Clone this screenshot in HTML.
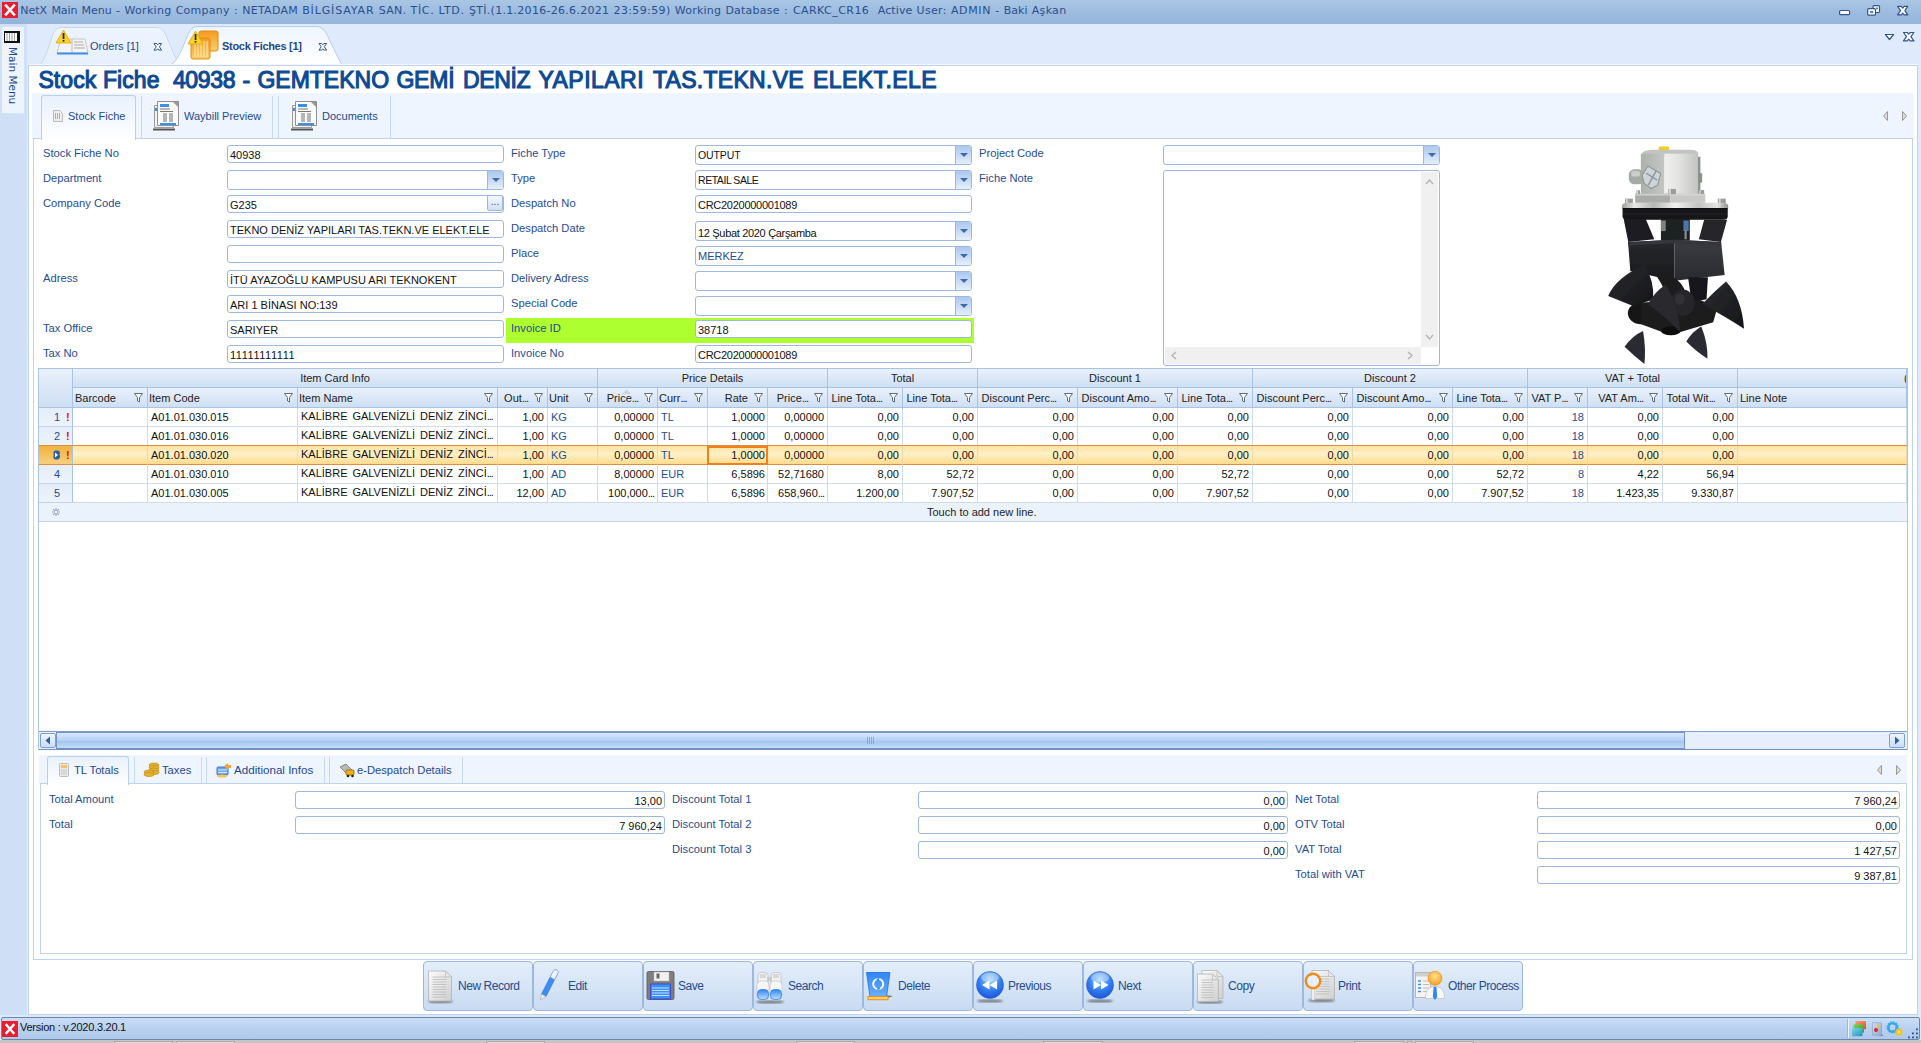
<!DOCTYPE html><html><head><meta charset="utf-8"><title>NetX Main Menu</title><style>
*{box-sizing:border-box}
html,body{margin:0;padding:0}
body{width:1921px;height:1043px;overflow:hidden;position:relative;background:#dfebfc;font:11px "Liberation Sans",sans-serif;color:#1e4a8c}
.a{position:absolute;white-space:pre}
.lbl{position:absolute;white-space:pre;font-size:11.2px;color:#1f4d91;line-height:14px}
.inp{position:absolute;height:18px;border:1px solid #9db8dc;border-radius:3px;background:#fff;color:#111;font-size:11px;line-height:19px;padding-left:2px;white-space:pre;overflow:hidden}
.inp.r{text-align:right;padding-right:2px}
.dd{position:absolute;right:0;top:0;bottom:0;width:16px;border-left:1px solid #9db8dc;background:linear-gradient(#abc8f0,#cadcf6 55%,#e6effb)}
.dd:after{content:"";position:absolute;left:4px;top:7px;border:4px solid transparent;border-top:4px solid #3f6aa6;border-bottom:0}
.seg{font-family:"Liberation Sans",sans-serif;font-size:11px;color:#1e4a8c}
.gh{position:absolute;background:linear-gradient(#e9f1fc,#cfdff3);border-right:1px solid #a9c3e3;border-bottom:1px solid #a9c3e3;font-size:11px;color:#222;line-height:18px;white-space:pre;overflow:hidden}
.gc{position:absolute;height:19px;border-right:1px solid #cfdcee;border-bottom:1px solid #cfdcee;font-size:11px;color:#111;line-height:19px;white-space:pre;overflow:hidden;padding:0 3px}
.gc.r{text-align:right}
.gc.b{color:#1f4d91}
.btn{position:absolute;top:961px;width:110px;height:50px;border:1px solid #9db8dc;border-radius:4px;background:linear-gradient(#e4eefb,#c9dbf2)}
.btn span{position:absolute;left:34px;top:16px;font-size:12px;letter-spacing:-0.45px;line-height:16px;color:#1f4d91;white-space:pre}
</style></head><body>
<div class="a" style="left:0;top:0;width:1921px;height:24px;background:linear-gradient(#a9c6e5,#9bbade 60%,#94b4da)"></div>
<div class="a" style="left:2px;top:2px;width:16px;height:16px;background:#e81d2d"></div>
<svg class="a" style="left:2px;top:2px" width="16" height="16"><path d="M4 3.5L12 12.5M12 3.5L4 12.5" stroke="#fff" stroke-width="2.6" stroke-linecap="square"/></svg>
<div class="a" style="left:20px;top:3px;width:1060px;height:15px;font:11px 'DejaVu Sans',sans-serif;color:#2a4f8f;line-height:15px"><span class="a" style="left:0.2px;letter-spacing:0.04px">NetX </span><span class="a" style="left:31.4px;letter-spacing:-0.09px">Main </span><span class="a" style="left:61.5px;letter-spacing:0.02px">Menu </span><span class="a" style="left:96.0px;letter-spacing:0.32px">- </span><span class="a" style="left:104.5px;letter-spacing:0.3px">Working </span><span class="a" style="left:155.7px;letter-spacing:0.25px">Company </span><span class="a" style="left:214.0px;letter-spacing:0.38px">: </span><span class="a" style="left:222.3px;letter-spacing:0.26px">NETADAM </span><span class="a" style="left:282.2px;letter-spacing:0.87px">BİLGİSAYAR </span><span class="a" style="left:358.7px;letter-spacing:0.29px">SAN. </span><span class="a" style="left:390.5px;letter-spacing:0.69px">TİC. </span><span class="a" style="left:418.6px;letter-spacing:0.72px">LTD. </span><span class="a" style="left:449.0px;letter-spacing:0.29px">ŞTİ.(1.1.2016-26.6.2021 </span><span class="a" style="left:593.5px;letter-spacing:0.38px">23:59:59) </span><span class="a" style="left:654.8px;letter-spacing:0.22px">Working </span><span class="a" style="left:705.4px;letter-spacing:0.22px">Database </span><span class="a" style="left:763.9px;letter-spacing:1.08px">: </span><span class="a" style="left:772.9px;letter-spacing:0.44px">CARKC_CR16 </span><span class="a" style="left:857.8px;letter-spacing:0.09px">Active </span><span class="a" style="left:896.6px;letter-spacing:0.3px">User: </span><span class="a" style="left:930.9px;letter-spacing:0.65px">ADMIN </span><span class="a" style="left:975.3px;letter-spacing:0.22px">- </span><span class="a" style="left:983.7px;letter-spacing:0.05px">Baki </span><span class="a" style="left:1011.8px;letter-spacing:0.29px">Aşkan </span></div>
<svg class="a" style="left:1830px;top:0" width="91" height="24"><g fill="#fff" stroke="#34568c" stroke-width="1.2" stroke-linejoin="round"><rect x="9.6" y="10.5" width="10" height="4.2" rx="1"/><rect x="43" y="5.700" width="6.500" height="6.800" rx="1"/><rect x="46.300" y="7.800" width="1.200" height="1.200" stroke-width="0.7"/><rect x="37.700" y="8.700" width="7.800" height="6.500" rx="1"/><rect x="40.300" y="11.500" width="2.600" height="1.200" stroke-width="0.8"/><path d="M67.60 6.40 L71.27 6.40 L72.70 8.08 L74.13 6.40 L77.80 6.40 L74.84 10.60 L77.80 14.80 L74.13 14.80 L72.70 13.12 L71.27 14.80 L67.60 14.80 L70.56 10.60z"/></g></svg>
<div class="a" style="left:0;top:24px;width:27px;height:994px;background:#cfdff5"></div>
<div class="a" style="left:1px;top:26px;width:24px;height:88px;background:#edf4fd;border:1px solid #d3e2f6"></div>
<svg class="a" style="left:4px;top:31px" width="16" height="12"><rect x="0" y="0" width="16" height="12" fill="#111"/><rect x="1" y="2" width="12" height="8" fill="#fff"/><path d="M3 2v8M5.500 2v8M8 2v8M10.500 2v8" stroke="#777" stroke-width="0.7"/></svg>
<div class="a" style="left:19px;top:47px;transform-origin:0 0;transform:rotate(90deg);font:10.5px 'DejaVu Sans',sans-serif;letter-spacing:0px;color:#1e4a8c">Main Menu</div>
<svg class="a" style="left:28px;top:24px" width="1893" height="42">
<defs><linearGradient id="tg" x1="0" y1="0" x2="0" y2="1"><stop offset="0" stop-color="#edf4fe"/><stop offset="1" stop-color="#e6effc"/></linearGradient>
<linearGradient id="tg2" x1="0" y1="0" x2="0" y2="1"><stop offset="0" stop-color="#eef5fe"/><stop offset="1" stop-color="#ffffff"/></linearGradient></defs>
<path d="M9 41.500C14 41.500 16 35 20 25C24.500 13 25 3.500 33 3.500H128C134 3.500 136 6 140 16L151 41.500z" fill="url(#tg)" stroke="#c5d8f1"/>
<path d="M139 41.500C146 41.500 149 35 154 25C159.500 13 161 2.500 169 2.500H288C296 2.500 298 9 302 17L314 41.500z" fill="url(#tg2)" stroke="#b5cdec"/>
</svg>
<div class="a seg" style="left:90px;top:40px">Orders [1]</div>
<div class="a seg" style="left:222px;top:40px;font-weight:bold;font-size:11px;letter-spacing:-0.3px">Stock Fiches [1]</div>
<svg class="a" style="left:153px;top:42px" width="10" height="10"><path d="M1.00 1.50 L3.74 1.50 L4.80 2.82 L5.86 1.50 L8.60 1.50 L6.40 4.80 L8.60 8.10 L5.86 8.10 L4.80 6.78 L3.74 8.10 L1.00 8.10 L3.20 4.80z" fill="#fff" stroke="#34568c" stroke-width="1" stroke-linejoin="round"/></svg>
<svg class="a" style="left:318px;top:42px" width="10" height="10"><path d="M1.00 1.50 L3.74 1.50 L4.80 2.82 L5.86 1.50 L8.60 1.50 L6.40 4.80 L8.60 8.10 L5.86 8.10 L4.80 6.78 L3.74 8.10 L1.00 8.10 L3.20 4.80z" fill="#fff" stroke="#34568c" stroke-width="1" stroke-linejoin="round"/></svg>
<svg class="a" style="left:55px;top:28px" width="34" height="30">
<path d="M2 25L6 11h24l3 14z" fill="#f4f4f4" stroke="#c8c8c8"/><path d="M17 11v14" stroke="#bbb"/><path d="M19 14h9M19 17h10M19 20h11" stroke="#aaa"/><path d="M2 25.500h31" stroke="#3b8fe8" stroke-width="2"/>
<path d="M8.500 2L16 15H1z" fill="#fbd22b" stroke="#e0a800" stroke-width="0.8"/><rect x="7.700" y="5" width="1.700" height="6" fill="#222"/><rect x="7.700" y="12" width="1.700" height="1.600" fill="#222"/></svg>
<svg class="a" style="left:187px;top:29px" width="34" height="32">
<defs><linearGradient id="og" x1="0" y1="0" x2="0" y2="1"><stop offset="0" stop-color="#f59a1e"/><stop offset="1" stop-color="#fbd06a"/></linearGradient></defs>
<rect x="12" y="2" width="19" height="20" rx="2" fill="url(#og)" stroke="#e58a10"/>
<rect x="4" y="9" width="19" height="21" rx="2" fill="url(#og)" stroke="#e58a10"/>
<path d="M8 12v16M11 12v16M14 12v16M17 12v16M20 12v16" stroke="#fde9b8" stroke-width="1"/>
<path d="M8.500 2L16 15H1z" fill="#fbd22b" stroke="#e0a800" stroke-width="0.8"/><rect x="7.700" y="5" width="1.700" height="6" fill="#222"/><rect x="7.700" y="12" width="1.700" height="1.600" fill="#222"/></svg>
<svg class="a" style="left:1880px;top:30px" width="40" height="14"><g fill="#fff" stroke="#34568c" stroke-width="1.2" stroke-linejoin="round"><path d="M5.400 4.500h8.200l-4.100 5z"/><path d="M23.50 2.50 L27.24 2.50 L28.70 4.18 L30.16 2.50 L33.90 2.50 L30.88 6.70 L33.90 10.90 L30.16 10.90 L28.70 9.22 L27.24 10.90 L23.50 10.90 L26.52 6.70z"/></g></svg>
<div class="a" style="left:28px;top:64px;width:1890px;height:1px;background:#f4f8fe"></div>
<div class="a" style="left:28px;top:65px;width:1890px;height:950px;background:#fff;border:1px solid #bdd3ef"></div>
<div class="a" style="left:38px;top:66px;width:1000px;height:28px;font:normal 23px 'Liberation Sans',sans-serif;color:#0d4a94;-webkit-text-stroke:1.1px #0d4a94;line-height:28px"><span class="a" style="left:0.4px;letter-spacing:0.10px">Stock Fiche </span><span class="a" style="left:134.9px;letter-spacing:-0.32px">40938 </span><span class="a" style="left:204.4px;letter-spacing:0.00px">- </span><span class="a" style="left:219.4px;letter-spacing:0.01px">GEMTEKNO </span><span class="a" style="left:358.4px;letter-spacing:-0.19px">GEMİ </span><span class="a" style="left:424.9px;letter-spacing:-0.32px">DENİZ </span><span class="a" style="left:500.4px;letter-spacing:0.48px">YAPILARI </span><span class="a" style="left:614.9px;letter-spacing:0.29px">TAS.TEKN.VE </span><span class="a" style="left:774.9px;letter-spacing:0.44px">ELEKT.ELE </span></div>
<div class="a" style="left:32px;top:93px;width:1882px;height:46px;background:#eef5fe"></div>
<div class="a" style="left:33px;top:138px;width:1880px;height:822px;background:#fff;border:1px solid #bdd3ef"></div>
<div class="a" style="left:41px;top:95px;width:95px;height:45px;background:linear-gradient(#e8f1fd,#fff);border:1px solid #b9d0ee;border-bottom:0;border-radius:3px 3px 0 0"></div>
<div class="a" style="left:141px;top:96px;width:1px;height:42px;background:#c8daf2"></div>
<div class="a" style="left:272px;top:96px;width:1px;height:42px;background:#c8daf2"></div>
<div class="a" style="left:278px;top:96px;width:1px;height:42px;background:#c8daf2"></div>
<div class="a" style="left:390px;top:96px;width:1px;height:42px;background:#c8daf2"></div>
<div class="a seg" style="left:68px;top:110px">Stock Fiche</div>
<div class="a seg" style="left:184px;top:110px">Waybill Preview</div>
<div class="a seg" style="left:322px;top:110px">Documents</div>
<svg class="a" style="left:52px;top:108px" width="13" height="15"><path d="M1.500 2.500h6l3 3v8h-9z" fill="#eee" stroke="#bbb"/><path d="M3.500 5v6M5.500 5v6M7.500 5v6" stroke="#f3a53a"/></svg>
<svg class="a" style="left:153px;top:99px" width="27" height="32">
<path d="M1.500 6.500h19v22h-19z" fill="#f2f2f2" stroke="#9a9a9a"/><rect x="2" y="9" width="2" height="3" fill="#3b8fe8"/>
<path d="M4.500 2.500h21v24h-21z" fill="#fafafa" stroke="#8f8f8f"/><path d="M20 3h5v5z" fill="#999"/>
<rect x="7" y="5" width="9" height="3" fill="#3b8fe8"/><path d="M7 10h10M7 12.500h13" stroke="#777"/>
<rect x="10" y="14" width="4" height="9" fill="#b5b5b5"/><rect x="16" y="14" width="4" height="9" fill="#b5b5b5"/><rect x="7" y="24" width="16" height="2" fill="#3b8fe8"/>
<path d="M0 30.500h22" stroke="#555" stroke-width="2"/></svg>
<svg class="a" style="left:291px;top:99px" width="27" height="32">
<path d="M1.500 6.500h19v22h-19z" fill="#f2f2f2" stroke="#9a9a9a"/><rect x="2" y="9" width="2" height="3" fill="#3b8fe8"/>
<path d="M4.500 2.500h21v24h-21z" fill="#fafafa" stroke="#8f8f8f"/><path d="M20 3h5v5z" fill="#999"/>
<rect x="7" y="5" width="9" height="3" fill="#3b8fe8"/><path d="M7 10h10M7 12.500h13" stroke="#777"/>
<rect x="10" y="14" width="4" height="9" fill="#b5b5b5"/><rect x="16" y="14" width="4" height="9" fill="#b5b5b5"/><rect x="7" y="24" width="16" height="2" fill="#3b8fe8"/>
<path d="M0 30.500h22" stroke="#555" stroke-width="2"/></svg>
<svg class="a" style="left:1881px;top:110px" width="30" height="12"><path d="M6.500 1.500v9l-4-4.500z" fill="#ddd" stroke="#999"/><path d="M21.500 1.500v9l4-4.500z" fill="#ddd" stroke="#999"/></svg>
<div class="a" style="left:506px;top:318px;width:468px;height:25px;background:#adff2f"></div>
<div class="lbl" style="left:43px;top:145.5px">Stock Fiche No</div>
<div class="inp " style="left:227px;top:145px;width:277px;">40938</div>
<div class="lbl" style="left:43px;top:170.5px">Department</div>
<div class="inp " style="left:227px;top:170px;width:277px;height:20px;"><i class=dd></i></div>
<div class="lbl" style="left:43px;top:195.5px">Company Code</div>
<div class="inp " style="left:227px;top:195px;width:277px;">G235</div>
<div class="inp " style="left:227px;top:220px;width:277px;">TEKNO DENİZ YAPILARI TAS.TEKN.VE ELEKT.ELE</div>
<div class="inp " style="left:227px;top:245px;width:277px;"></div>
<div class="lbl" style="left:43px;top:270.5px">Adress</div>
<div class="inp " style="left:227px;top:270px;width:277px;">İTÜ AYAZOĞLU KAMPUSU ARI TEKNOKENT</div>
<div class="inp " style="left:227px;top:295px;width:277px;">ARI 1 BİNASI NO:139</div>
<div class="lbl" style="left:43px;top:320.5px">Tax Office</div>
<div class="inp " style="left:227px;top:320px;width:277px;">SARIYER</div>
<div class="lbl" style="left:43px;top:345.5px">Tax No</div>
<div class="inp " style="left:227px;top:345px;width:277px;letter-spacing:0.55px;">11111111111</div>
<div class="a" style="left:487px;top:195px;width:16px;height:16px;border:1px solid #9db8dc;border-radius:2px;background:linear-gradient(#f3f8fe,#cfe0f5);font-size:10px;line-height:12px;text-align:center;color:#1f4d91">...</div>
<div class="lbl" style="left:511px;top:145.5px">Fiche Type</div>
<div class="inp " style="left:695px;top:145px;width:277px;height:20px;font-size:10.5px;letter-spacing:-0.1px;">OUTPUT<i class=dd></i></div>
<div class="lbl" style="left:511px;top:170.5px">Type</div>
<div class="inp " style="left:695px;top:170px;width:277px;height:20px;font-size:10.5px;letter-spacing:-0.45px;">RETAIL SALE<i class=dd></i></div>
<div class="lbl" style="left:511px;top:195.5px">Despatch No</div>
<div class="inp " style="left:695px;top:195px;width:277px;letter-spacing:-0.27px;">CRC2020000001089</div>
<div class="lbl" style="left:511px;top:220.5px">Despatch Date</div>
<div class="inp " style="left:695px;top:221px;width:277px;height:20px;line-height:22px;letter-spacing:-0.32px;">12 Şubat 2020 Çarşamba<i class=dd></i></div>
<div class="lbl" style="left:511px;top:245.5px">Place</div>
<div class="inp " style="left:695px;top:246px;width:277px;height:20px;color:#1f4d91;">MERKEZ<i class=dd></i></div>
<div class="lbl" style="left:511px;top:270.5px">Delivery Adress</div>
<div class="inp " style="left:695px;top:271px;width:277px;height:20px;"><i class=dd></i></div>
<div class="lbl" style="left:511px;top:295.5px">Special Code</div>
<div class="inp " style="left:695px;top:296px;width:277px;height:20px;"><i class=dd></i></div>
<div class="lbl" style="left:511px;top:320.5px">Invoice ID</div>
<div class="inp " style="left:695px;top:320px;width:277px;">38718</div>
<div class="lbl" style="left:511px;top:345.5px">Invoice No</div>
<div class="inp " style="left:695px;top:345px;width:277px;letter-spacing:-0.27px;">CRC2020000001089</div>
<div class="lbl" style="left:979px;top:145.5px">Project Code</div>
<div class="lbl" style="left:979px;top:170.5px">Fiche Note</div>
<div class="inp " style="left:1163px;top:145px;width:277px;height:20px;"><i class=dd></i></div>
<div class="a" style="left:1163px;top:170px;width:277px;height:196px;border:1px solid #9db8dc;border-radius:3px;background:#fff"></div>
<div class="a" style="left:1421px;top:172px;width:17px;height:175px;background:#f0f0f0"></div>
<div class="a" style="left:1165px;top:347px;width:256px;height:17px;background:#f0f0f0"></div>
<svg class="a" style="left:1421px;top:172px" width="17" height="192"><path d="M5 12l3.500-4 3.500 4M5 163l3.500 4 3.500-4" fill="none" stroke="#b2b2b2" stroke-width="1.300"/></svg>
<svg class="a" style="left:1165px;top:347px" width="256" height="17"><path d="M11 5l-4 3.500 4 3.500M243 5l4 3.500-4 3.500" fill="none" stroke="#b2b2b2" stroke-width="1.300"/></svg>
<svg class="a" style="left:1580px;top:140px" width="200" height="230" viewBox="0 0 907 1043">
<defs>
<linearGradient id="mL" x1="0" y1="0" x2="1" y2="0"><stop offset="0" stop-color="#aeb2ad"/><stop offset="1" stop-color="#c3c6c2"/></linearGradient>
<linearGradient id="mR" x1="0" y1="0" x2="1" y2="0"><stop offset="0" stop-color="#f0f0ef"/><stop offset="0.45" stop-color="#e2e3e1"/><stop offset="1" stop-color="#c2c4c1"/></linearGradient>
<linearGradient id="fl" x1="0" y1="0" x2="1" y2="0"><stop offset="0" stop-color="#9a9c9a"/><stop offset="0.12" stop-color="#e8e8e7"/><stop offset="0.3" stop-color="#b4b6b4"/><stop offset="0.5" stop-color="#f2f2f1"/><stop offset="0.72" stop-color="#c2c3c1"/><stop offset="0.9" stop-color="#e4e4e3"/><stop offset="1" stop-color="#8c8e8c"/></linearGradient>
<linearGradient id="rim" x1="0" y1="0" x2="0" y2="1"><stop offset="0" stop-color="#0e0f11"/><stop offset="0.5" stop-color="#1b1c1f"/><stop offset="1" stop-color="#0f1012"/></linearGradient>
<linearGradient id="hL" x1="0" y1="0" x2="0" y2="1"><stop offset="0" stop-color="#27282c"/><stop offset="1" stop-color="#1a1b1e"/></linearGradient>
<linearGradient id="hR" x1="0" y1="0" x2="0" y2="1"><stop offset="0" stop-color="#3a3b40"/><stop offset="1" stop-color="#2a2b30"/></linearGradient>
<linearGradient id="bld" x1="0" y1="0" x2="1" y2="1"><stop offset="0" stop-color="#2c2d31"/><stop offset="1" stop-color="#141517"/></linearGradient>
<filter id="bl" x="-5%" y="-5%" width="110%" height="110%"><feGaussianBlur stdDeviation="2.2"/></filter>
</defs>
<g filter="url(#bl)">
<rect x="357" y="29" width="47" height="20" rx="6" fill="#f1cc22"/>
<path d="M283 56Q300 44 330 44H500Q528 44 536 58L536 76H283z" fill="#c2c4c1"/>
<rect x="276" y="62" width="107" height="186" fill="url(#mL)"/>
<rect x="383" y="62" width="151" height="186" fill="url(#mR)"/>
<rect x="534" y="76" width="12" height="172" fill="#8f938f"/>
<rect x="540" y="150" width="14" height="44" rx="6" fill="#8a8f8a"/>
<rect x="221" y="133" width="70" height="68" rx="26" fill="#a3aca5"/>
<rect x="232" y="140" width="40" height="26" rx="12" fill="#c9d0ca"/>
<path d="M282 160L308 118L366 152L352 205L322 220L290 196z" fill="#cfd4d6" stroke="#8d9698" stroke-width="5"/>
<path d="M300 150L350 182M345 140L310 205" stroke="#8a9aa8" stroke-width="7"/>
<rect x="250" y="243" width="160" height="42" fill="#a9aca8"/><rect x="410" y="243" width="158" height="42" fill="#c9cac8"/>
<rect x="250" y="243" width="318" height="9" fill="#d7d8d6" opacity="0.8"/>
<g fill="#9a9d99"><rect x="256" y="228" width="16" height="18"/><rect x="401" y="222" width="34" height="24"/><rect x="537" y="227" width="26" height="18"/><rect x="204" y="266" width="36" height="20"/><rect x="625" y="266" width="36" height="20"/></g>
<g fill="#d6d7d5"><rect x="258" y="228" width="5" height="18"/><rect x="404" y="222" width="8" height="24"/><rect x="541" y="227" width="6" height="18"/><rect x="208" y="266" width="8" height="20"/><rect x="630" y="266" width="8" height="20"/></g>
<path d="M190 298Q190 286 215 284H648Q672 286 672 298V312H190z" fill="url(#fl)"/>
<path d="M193 308H670V346Q670 362 648 362H215Q193 362 193 346z" fill="url(#rim)"/>
<path d="M198 358H298L337 450L219 462z" fill="#1c1d20"/>
<path d="M563 362H667L639 462L539 450z" fill="#25262a"/>
<path d="M367 358H498V456H367z" fill="#1f2023"/>
<rect x="367" y="365" width="22" height="48" fill="#7f817f"/><rect x="469" y="365" width="24" height="48" fill="#4f74a8"/><rect x="474" y="410" width="10" height="40" fill="#8a8c8a"/>
<path d="M218 462L428 452V638L228 594z" fill="url(#hL)"/>
<path d="M428 452L640 462L656 612L428 638z" fill="url(#hR)"/>
<path d="M218 462L428 452L640 462L640 478L428 468L218 478z" fill="#34353a"/>
<path d="M490 622H580L574 722L506 736z" fill="#17181b"/>
<path d="M330 598L395 606Q470 640 480 700L400 730Q372 640 330 598z" fill="#1a1b1e"/>
<ellipse cx="277" cy="786" rx="60" ry="50" fill="#131416"/>
<path d="M277 738L520 716L624 756L604 826L410 884L277 836z" fill="#1a1b1e"/>
<ellipse cx="466" cy="738" rx="54" ry="60" fill="#25262a"/>
<ellipse cx="452" cy="722" rx="22" ry="26" fill="#36373c" opacity="0.7"/>
<ellipse cx="412" cy="866" rx="44" ry="20" fill="#0e0f10"/>
<path d="M128 708Q160 626 292 566Q338 640 332 724L238 752z" fill="url(#bld)"/>
<path d="M308 744Q336 690 388 656Q446 740 454 870Q398 812 308 744z" fill="#2a2b2f"/>
<path d="M554 744Q606 690 662 642Q734 716 744 856Q660 802 554 744z" fill="url(#bld)"/>
<path d="M202 938Q236 888 286 866Q300 950 292 1016Q248 982 202 938z" fill="#2b2c30"/>
<path d="M482 914Q508 870 550 846Q580 920 578 992Q530 962 482 914z" fill="#2b2c30"/>
</g></svg>
<div class="a" style="left:38px;top:368px;width:1870px;height:382px;border:1px solid #a9c3e3;background:#fff"></div>
<div class="gh" style="left:39px;top:369px;width:34px;height:39px"></div>
<div class="gh" style="left:73px;top:369px;width:525px;height:19px;text-align:center">Item Card Info</div>
<div class="gh" style="left:598px;top:369px;width:230px;height:19px;text-align:center">Price Details</div>
<div class="gh" style="left:828px;top:369px;width:150px;height:19px;text-align:center">Total</div>
<div class="gh" style="left:978px;top:369px;width:275px;height:19px;text-align:center">Discount 1</div>
<div class="gh" style="left:1253px;top:369px;width:275px;height:19px;text-align:center">Discount 2</div>
<div class="gh" style="left:1528px;top:369px;width:210px;height:19px;text-align:center">VAT + Total</div>
<div class="gh" style="left:1738px;top:369px;width:169px;height:19px;text-align:center"></div>
<div class="a" style="left:1904px;top:372px;font-size:11px;color:#222;width:2px;overflow:hidden">(</div>
<div class="gh" style="left:73px;top:388px;width:75px;height:20px;line-height:20px"><span style="position:absolute;left:2px">Barcode</span><svg style="position:absolute;right:4px;top:5px" width="9" height="10"><path d="M0.500 0.500h8l-3 4v4.500l-2-1v-3.500z" fill="#fff" stroke="#4a5e7a" stroke-width="0.9"/></svg></div>
<div class="gh" style="left:148px;top:388px;width:150px;height:20px;line-height:20px"><span style="position:absolute;left:1px">Item Code</span><svg style="position:absolute;right:4px;top:5px" width="9" height="10"><path d="M0.500 0.500h8l-3 4v4.500l-2-1v-3.500z" fill="#fff" stroke="#4a5e7a" stroke-width="0.9"/></svg></div>
<div class="gh" style="left:298px;top:388px;width:200px;height:20px;line-height:20px"><span style="position:absolute;left:1px">Item Name</span><svg style="position:absolute;right:4px;top:5px" width="9" height="10"><path d="M0.500 0.500h8l-3 4v4.500l-2-1v-3.500z" fill="#fff" stroke="#4a5e7a" stroke-width="0.9"/></svg></div>
<div class="gh" style="left:498px;top:388px;width:50px;height:20px;line-height:20px"><span style="position:absolute;right:19px">Out<span style="letter-spacing:-1px">...</span></span><svg style="position:absolute;right:4px;top:5px" width="9" height="10"><path d="M0.500 0.500h8l-3 4v4.500l-2-1v-3.500z" fill="#fff" stroke="#4a5e7a" stroke-width="0.9"/></svg></div>
<div class="gh" style="left:548px;top:388px;width:50px;height:20px;line-height:20px"><span style="position:absolute;left:1px">Unit</span><svg style="position:absolute;right:4px;top:5px" width="9" height="10"><path d="M0.500 0.500h8l-3 4v4.500l-2-1v-3.500z" fill="#fff" stroke="#4a5e7a" stroke-width="0.9"/></svg></div>
<div class="gh" style="left:598px;top:388px;width:60px;height:20px;line-height:20px"><span style="position:absolute;right:19px">Price<span style="letter-spacing:-1px">...</span></span><svg style="position:absolute;right:4px;top:5px" width="9" height="10"><path d="M0.500 0.500h8l-3 4v4.500l-2-1v-3.500z" fill="#fff" stroke="#4a5e7a" stroke-width="0.9"/></svg></div>
<div class="gh" style="left:658px;top:388px;width:50px;height:20px;line-height:20px"><span style="position:absolute;left:1px">Curr<span style="letter-spacing:-1px">...</span></span><svg style="position:absolute;right:4px;top:5px" width="9" height="10"><path d="M0.500 0.500h8l-3 4v4.500l-2-1v-3.500z" fill="#fff" stroke="#4a5e7a" stroke-width="0.9"/></svg></div>
<div class="gh" style="left:708px;top:388px;width:60px;height:20px;line-height:20px"><span style="position:absolute;right:19px">Rate</span><svg style="position:absolute;right:4px;top:5px" width="9" height="10"><path d="M0.500 0.500h8l-3 4v4.500l-2-1v-3.500z" fill="#fff" stroke="#4a5e7a" stroke-width="0.9"/></svg></div>
<div class="gh" style="left:768px;top:388px;width:60px;height:20px;line-height:20px"><span style="position:absolute;right:19px">Price<span style="letter-spacing:-1px">...</span></span><svg style="position:absolute;right:4px;top:5px" width="9" height="10"><path d="M0.500 0.500h8l-3 4v4.500l-2-1v-3.500z" fill="#fff" stroke="#4a5e7a" stroke-width="0.9"/></svg></div>
<div class="gh" style="left:828px;top:388px;width:75px;height:20px;line-height:20px"><span style="position:absolute;left:3.5px">Line Tota<span style="letter-spacing:-1px">...</span></span><svg style="position:absolute;right:4px;top:5px" width="9" height="10"><path d="M0.500 0.500h8l-3 4v4.500l-2-1v-3.500z" fill="#fff" stroke="#4a5e7a" stroke-width="0.9"/></svg></div>
<div class="gh" style="left:903px;top:388px;width:75px;height:20px;line-height:20px"><span style="position:absolute;left:3.5px">Line Tota<span style="letter-spacing:-1px">...</span></span><svg style="position:absolute;right:4px;top:5px" width="9" height="10"><path d="M0.500 0.500h8l-3 4v4.500l-2-1v-3.500z" fill="#fff" stroke="#4a5e7a" stroke-width="0.9"/></svg></div>
<div class="gh" style="left:978px;top:388px;width:100px;height:20px;line-height:20px"><span style="position:absolute;left:3.5px">Discount Perc<span style="letter-spacing:-1px">...</span></span><svg style="position:absolute;right:4px;top:5px" width="9" height="10"><path d="M0.500 0.500h8l-3 4v4.500l-2-1v-3.500z" fill="#fff" stroke="#4a5e7a" stroke-width="0.9"/></svg></div>
<div class="gh" style="left:1078px;top:388px;width:100px;height:20px;line-height:20px"><span style="position:absolute;left:3.5px">Discount Amo<span style="letter-spacing:-1px">...</span></span><svg style="position:absolute;right:4px;top:5px" width="9" height="10"><path d="M0.500 0.500h8l-3 4v4.500l-2-1v-3.500z" fill="#fff" stroke="#4a5e7a" stroke-width="0.9"/></svg></div>
<div class="gh" style="left:1178px;top:388px;width:75px;height:20px;line-height:20px"><span style="position:absolute;left:3.5px">Line Tota<span style="letter-spacing:-1px">...</span></span><svg style="position:absolute;right:4px;top:5px" width="9" height="10"><path d="M0.500 0.500h8l-3 4v4.500l-2-1v-3.500z" fill="#fff" stroke="#4a5e7a" stroke-width="0.9"/></svg></div>
<div class="gh" style="left:1253px;top:388px;width:100px;height:20px;line-height:20px"><span style="position:absolute;left:3.5px">Discount Perc<span style="letter-spacing:-1px">...</span></span><svg style="position:absolute;right:4px;top:5px" width="9" height="10"><path d="M0.500 0.500h8l-3 4v4.500l-2-1v-3.500z" fill="#fff" stroke="#4a5e7a" stroke-width="0.9"/></svg></div>
<div class="gh" style="left:1353px;top:388px;width:100px;height:20px;line-height:20px"><span style="position:absolute;left:3.5px">Discount Amo<span style="letter-spacing:-1px">...</span></span><svg style="position:absolute;right:4px;top:5px" width="9" height="10"><path d="M0.500 0.500h8l-3 4v4.500l-2-1v-3.500z" fill="#fff" stroke="#4a5e7a" stroke-width="0.9"/></svg></div>
<div class="gh" style="left:1453px;top:388px;width:75px;height:20px;line-height:20px"><span style="position:absolute;left:3.5px">Line Tota<span style="letter-spacing:-1px">...</span></span><svg style="position:absolute;right:4px;top:5px" width="9" height="10"><path d="M0.500 0.500h8l-3 4v4.500l-2-1v-3.500z" fill="#fff" stroke="#4a5e7a" stroke-width="0.9"/></svg></div>
<div class="gh" style="left:1528px;top:388px;width:60px;height:20px;line-height:20px"><span style="position:absolute;left:3.5px">VAT P<span style="letter-spacing:-1px">...</span></span><svg style="position:absolute;right:4px;top:5px" width="9" height="10"><path d="M0.500 0.500h8l-3 4v4.500l-2-1v-3.500z" fill="#fff" stroke="#4a5e7a" stroke-width="0.9"/></svg></div>
<div class="gh" style="left:1588px;top:388px;width:75px;height:20px;line-height:20px"><span style="position:absolute;right:19px">VAT Am<span style="letter-spacing:-1px">...</span></span><svg style="position:absolute;right:4px;top:5px" width="9" height="10"><path d="M0.500 0.500h8l-3 4v4.500l-2-1v-3.500z" fill="#fff" stroke="#4a5e7a" stroke-width="0.9"/></svg></div>
<div class="gh" style="left:1663px;top:388px;width:75px;height:20px;line-height:20px"><span style="position:absolute;left:3.5px">Total Wit<span style="letter-spacing:-1px">...</span></span><svg style="position:absolute;right:4px;top:5px" width="9" height="10"><path d="M0.500 0.500h8l-3 4v4.500l-2-1v-3.500z" fill="#fff" stroke="#4a5e7a" stroke-width="0.9"/></svg></div>
<div class="gh" style="left:1738px;top:388px;width:169px;height:20px;line-height:20px"><span style="position:absolute;left:2px">Line Note</span></div>
<svg class="a" style="left:622px;top:389px" width="9" height="5"><path d="M0 5l4.500-4.500 4.500 4.500z" fill="#c5d3e6"/></svg>
<div class="a" style="left:39px;top:408px;width:34px;height:19px;background:linear-gradient(#e4edf9,#edf3fc);border-right:1px solid #a9c3e3;border-bottom:1px solid #c3d5ec"></div>
<div class="a" style="left:48px;top:411px;width:12px;text-align:right;font-size:11px;color:#1f4d91;">1</div>
<div class="a" style="left:66px;top:411px;font:bold 11px 'Liberation Sans',sans-serif;color:#d4141c">!</div>
<div class="gc" style="left:73px;top:408px;width:75px;"></div>
<div class="gc" style="left:148px;top:408px;width:150px;">A01.01.030.015</div>
<div class="gc" style="left:298px;top:408px;width:200px;font-size:11px;word-spacing:-0.6px;line-height:16px;">KALİBRE  GALVENİZLİ  DENİZ  ZİNCİ<span style="letter-spacing:-1px">...</span></div>
<div class="gc r" style="left:498px;top:408px;width:50px;">1,00</div>
<div class="gc b" style="left:548px;top:408px;width:50px;">KG</div>
<div class="gc r" style="left:598px;top:408px;width:60px;">0,00000</div>
<div class="gc b" style="left:658px;top:408px;width:50px;">TL</div>
<div class="gc r" style="left:708px;top:408px;width:60px;padding-right:2px;">1,0000</div>
<div class="gc r" style="left:768px;top:408px;width:60px;">0,00000</div>
<div class="gc r" style="left:828px;top:408px;width:75px;">0,00</div>
<div class="gc r" style="left:903px;top:408px;width:75px;">0,00</div>
<div class="gc r" style="left:978px;top:408px;width:100px;">0,00</div>
<div class="gc r" style="left:1078px;top:408px;width:100px;">0,00</div>
<div class="gc r" style="left:1178px;top:408px;width:75px;">0,00</div>
<div class="gc r" style="left:1253px;top:408px;width:100px;">0,00</div>
<div class="gc r" style="left:1353px;top:408px;width:100px;">0,00</div>
<div class="gc r" style="left:1453px;top:408px;width:75px;">0,00</div>
<div class="gc r b" style="left:1528px;top:408px;width:60px;">18</div>
<div class="gc r" style="left:1588px;top:408px;width:75px;">0,00</div>
<div class="gc r" style="left:1663px;top:408px;width:75px;">0,00</div>
<div class="gc" style="left:1738px;top:408px;width:169px;"></div>
<div class="a" style="left:39px;top:427px;width:34px;height:19px;background:linear-gradient(#e4edf9,#edf3fc);border-right:1px solid #a9c3e3;border-bottom:1px solid #c3d5ec"></div>
<div class="a" style="left:48px;top:430px;width:12px;text-align:right;font-size:11px;color:#1f4d91;">2</div>
<div class="a" style="left:66px;top:430px;font:bold 11px 'Liberation Sans',sans-serif;color:#d4141c">!</div>
<div class="gc" style="left:73px;top:427px;width:75px;"></div>
<div class="gc" style="left:148px;top:427px;width:150px;">A01.01.030.016</div>
<div class="gc" style="left:298px;top:427px;width:200px;font-size:11px;word-spacing:-0.6px;line-height:16px;">KALİBRE  GALVENİZLİ  DENİZ  ZİNCİ<span style="letter-spacing:-1px">...</span></div>
<div class="gc r" style="left:498px;top:427px;width:50px;">1,00</div>
<div class="gc b" style="left:548px;top:427px;width:50px;">KG</div>
<div class="gc r" style="left:598px;top:427px;width:60px;">0,00000</div>
<div class="gc b" style="left:658px;top:427px;width:50px;">TL</div>
<div class="gc r" style="left:708px;top:427px;width:60px;padding-right:2px;">1,0000</div>
<div class="gc r" style="left:768px;top:427px;width:60px;">0,00000</div>
<div class="gc r" style="left:828px;top:427px;width:75px;">0,00</div>
<div class="gc r" style="left:903px;top:427px;width:75px;">0,00</div>
<div class="gc r" style="left:978px;top:427px;width:100px;">0,00</div>
<div class="gc r" style="left:1078px;top:427px;width:100px;">0,00</div>
<div class="gc r" style="left:1178px;top:427px;width:75px;">0,00</div>
<div class="gc r" style="left:1253px;top:427px;width:100px;">0,00</div>
<div class="gc r" style="left:1353px;top:427px;width:100px;">0,00</div>
<div class="gc r" style="left:1453px;top:427px;width:75px;">0,00</div>
<div class="gc r b" style="left:1528px;top:427px;width:60px;">18</div>
<div class="gc r" style="left:1588px;top:427px;width:75px;">0,00</div>
<div class="gc r" style="left:1663px;top:427px;width:75px;">0,00</div>
<div class="gc" style="left:1738px;top:427px;width:169px;"></div>
<div class="a" style="left:39px;top:445px;width:1868px;height:20px;background:linear-gradient(#fde2a0,#fff0c8 45%,#fddb8a);border:1px solid #dc8f3e;border-right:0"></div>
<div class="a" style="left:39px;top:446px;width:34px;height:19px;background:linear-gradient(#f3b23e,#f8d07a);border-right:1px solid #a9c3e3;border-bottom:1px solid #dc8f3e"></div>
<div class="a" style="left:48px;top:449px;width:12px;text-align:right;font-size:11px;color:#1f4d91;font-weight:bold;">3</div>
<div class="a" style="left:66px;top:449px;font:bold 11px 'Liberation Sans',sans-serif;color:#d4141c">!</div>
<div class="gc" style="left:73px;top:446px;width:75px;background:transparent;border-bottom-color:transparent;border-right-color:#f0d9a8;"></div>
<div class="gc" style="left:148px;top:446px;width:150px;background:transparent;border-bottom-color:transparent;border-right-color:#f0d9a8;">A01.01.030.020</div>
<div class="gc" style="left:298px;top:446px;width:200px;background:transparent;border-bottom-color:transparent;border-right-color:#f0d9a8;font-size:11px;word-spacing:-0.6px;line-height:16px;">KALİBRE  GALVENİZLİ  DENİZ  ZİNCİ<span style="letter-spacing:-1px">...</span></div>
<div class="gc r" style="left:498px;top:446px;width:50px;background:transparent;border-bottom-color:transparent;border-right-color:#f0d9a8;">1,00</div>
<div class="gc b" style="left:548px;top:446px;width:50px;background:transparent;border-bottom-color:transparent;border-right-color:#f0d9a8;">KG</div>
<div class="gc r" style="left:598px;top:446px;width:60px;background:transparent;border-bottom-color:transparent;border-right-color:#f0d9a8;">0,00000</div>
<div class="gc b" style="left:658px;top:446px;width:50px;background:transparent;border-bottom-color:transparent;border-right-color:#f0d9a8;">TL</div>
<div class="gc r" style="left:708px;top:446px;width:60px;background:transparent;border-bottom-color:transparent;border-right-color:#f0d9a8;padding-right:2px;">1,0000</div>
<div class="gc r" style="left:768px;top:446px;width:60px;background:transparent;border-bottom-color:transparent;border-right-color:#f0d9a8;">0,00000</div>
<div class="gc r" style="left:828px;top:446px;width:75px;background:transparent;border-bottom-color:transparent;border-right-color:#f0d9a8;">0,00</div>
<div class="gc r" style="left:903px;top:446px;width:75px;background:transparent;border-bottom-color:transparent;border-right-color:#f0d9a8;">0,00</div>
<div class="gc r" style="left:978px;top:446px;width:100px;background:transparent;border-bottom-color:transparent;border-right-color:#f0d9a8;">0,00</div>
<div class="gc r" style="left:1078px;top:446px;width:100px;background:transparent;border-bottom-color:transparent;border-right-color:#f0d9a8;">0,00</div>
<div class="gc r" style="left:1178px;top:446px;width:75px;background:transparent;border-bottom-color:transparent;border-right-color:#f0d9a8;">0,00</div>
<div class="gc r" style="left:1253px;top:446px;width:100px;background:transparent;border-bottom-color:transparent;border-right-color:#f0d9a8;">0,00</div>
<div class="gc r" style="left:1353px;top:446px;width:100px;background:transparent;border-bottom-color:transparent;border-right-color:#f0d9a8;">0,00</div>
<div class="gc r" style="left:1453px;top:446px;width:75px;background:transparent;border-bottom-color:transparent;border-right-color:#f0d9a8;">0,00</div>
<div class="gc r b" style="left:1528px;top:446px;width:60px;background:transparent;border-bottom-color:transparent;border-right-color:#f0d9a8;">18</div>
<div class="gc r" style="left:1588px;top:446px;width:75px;background:transparent;border-bottom-color:transparent;border-right-color:#f0d9a8;">0,00</div>
<div class="gc r" style="left:1663px;top:446px;width:75px;background:transparent;border-bottom-color:transparent;border-right-color:#f0d9a8;">0,00</div>
<div class="gc" style="left:1738px;top:446px;width:169px;background:transparent;border-bottom-color:transparent;border-right-color:#f0d9a8;"></div>
<div class="a" style="left:39px;top:465px;width:34px;height:19px;background:linear-gradient(#e4edf9,#edf3fc);border-right:1px solid #a9c3e3;border-bottom:1px solid #c3d5ec"></div>
<div class="a" style="left:48px;top:468px;width:12px;text-align:right;font-size:11px;color:#1f4d91;">4</div>
<div class="gc" style="left:73px;top:465px;width:75px;"></div>
<div class="gc" style="left:148px;top:465px;width:150px;">A01.01.030.010</div>
<div class="gc" style="left:298px;top:465px;width:200px;font-size:11px;word-spacing:-0.6px;line-height:16px;">KALİBRE  GALVENİZLİ  DENİZ  ZİNCİ<span style="letter-spacing:-1px">...</span></div>
<div class="gc r" style="left:498px;top:465px;width:50px;">1,00</div>
<div class="gc b" style="left:548px;top:465px;width:50px;">AD</div>
<div class="gc r" style="left:598px;top:465px;width:60px;">8,00000</div>
<div class="gc b" style="left:658px;top:465px;width:50px;">EUR</div>
<div class="gc r" style="left:708px;top:465px;width:60px;padding-right:2px;">6,5896</div>
<div class="gc r" style="left:768px;top:465px;width:60px;">52,71680</div>
<div class="gc r" style="left:828px;top:465px;width:75px;">8,00</div>
<div class="gc r" style="left:903px;top:465px;width:75px;">52,72</div>
<div class="gc r" style="left:978px;top:465px;width:100px;">0,00</div>
<div class="gc r" style="left:1078px;top:465px;width:100px;">0,00</div>
<div class="gc r" style="left:1178px;top:465px;width:75px;">52,72</div>
<div class="gc r" style="left:1253px;top:465px;width:100px;">0,00</div>
<div class="gc r" style="left:1353px;top:465px;width:100px;">0,00</div>
<div class="gc r" style="left:1453px;top:465px;width:75px;">52,72</div>
<div class="gc r b" style="left:1528px;top:465px;width:60px;">8</div>
<div class="gc r" style="left:1588px;top:465px;width:75px;">4,22</div>
<div class="gc r" style="left:1663px;top:465px;width:75px;">56,94</div>
<div class="gc" style="left:1738px;top:465px;width:169px;"></div>
<div class="a" style="left:39px;top:484px;width:34px;height:19px;background:linear-gradient(#e4edf9,#edf3fc);border-right:1px solid #a9c3e3;border-bottom:1px solid #c3d5ec"></div>
<div class="a" style="left:48px;top:487px;width:12px;text-align:right;font-size:11px;color:#1f4d91;">5</div>
<div class="gc" style="left:73px;top:484px;width:75px;"></div>
<div class="gc" style="left:148px;top:484px;width:150px;">A01.01.030.005</div>
<div class="gc" style="left:298px;top:484px;width:200px;font-size:11px;word-spacing:-0.6px;line-height:16px;">KALİBRE  GALVENİZLİ  DENİZ  ZİNCİ<span style="letter-spacing:-1px">...</span></div>
<div class="gc r" style="left:498px;top:484px;width:50px;">12,00</div>
<div class="gc b" style="left:548px;top:484px;width:50px;">AD</div>
<div class="gc r" style="left:598px;top:484px;width:60px;">100,000<span style="letter-spacing:-1px">...</span></div>
<div class="gc b" style="left:658px;top:484px;width:50px;">EUR</div>
<div class="gc r" style="left:708px;top:484px;width:60px;padding-right:2px;">6,5896</div>
<div class="gc r" style="left:768px;top:484px;width:60px;">658,960<span style="letter-spacing:-1px">...</span></div>
<div class="gc r" style="left:828px;top:484px;width:75px;">1.200,00</div>
<div class="gc r" style="left:903px;top:484px;width:75px;">7.907,52</div>
<div class="gc r" style="left:978px;top:484px;width:100px;">0,00</div>
<div class="gc r" style="left:1078px;top:484px;width:100px;">0,00</div>
<div class="gc r" style="left:1178px;top:484px;width:75px;">7.907,52</div>
<div class="gc r" style="left:1253px;top:484px;width:100px;">0,00</div>
<div class="gc r" style="left:1353px;top:484px;width:100px;">0,00</div>
<div class="gc r" style="left:1453px;top:484px;width:75px;">7.907,52</div>
<div class="gc r b" style="left:1528px;top:484px;width:60px;">18</div>
<div class="gc r" style="left:1588px;top:484px;width:75px;">1.423,35</div>
<div class="gc r" style="left:1663px;top:484px;width:75px;">9.330,87</div>
<div class="gc" style="left:1738px;top:484px;width:169px;"></div>
<svg class="a" style="left:53px;top:450px" width="7" height="10"><rect x="0.5" y="0.5" width="6" height="9" rx="2" fill="#2a5db0"/><path d="M2 2.500l3 2.500-3 2.500z" fill="#fff"/></svg>
<div class="a" style="left:707px;top:446px;width:61px;height:19px;border:2px solid #f0801a;background:transparent"></div>
<div class="a" style="left:39px;top:503px;width:1868px;height:19px;background:#eaf2fc;border-bottom:1px solid #c3d5ec"></div>
<div class="a" style="left:927px;top:506px;font-size:11px;color:#222">Touch to add new line.</div>
<svg class="a" style="left:51px;top:507px" width="10" height="10"><path d="M5 1v8M1 5h8M2.200 2.200l5.600 5.600M7.800 2.200l-5.600 5.600" stroke="#8fa3c0" stroke-width="1.200"/><circle cx="5" cy="5" r="1.600" fill="#eaf2fc"/></svg>
<div class="a" style="left:39px;top:731px;width:1868px;height:19px;background:#e6effb;border-top:1px solid #7f9ecb;border-bottom:1px solid #6f8fbf"></div>
<div class="a" style="left:56px;top:732px;width:1629px;height:17px;background:linear-gradient(#d9e8fc,#b4d0f6 50%,#a3c5f2 55%,#c4dbf9);border:1px solid #7393c4"></div>
<div class="a" style="left:40px;top:733px;width:16px;height:15px;border:1px solid #7f9fc9;border-radius:2px;background:linear-gradient(#eef5fe,#c9dcf5)"></div>
<div class="a" style="left:1889px;top:733px;width:16px;height:15px;border:1px solid #7f9fc9;border-radius:2px;background:linear-gradient(#eef5fe,#c9dcf5)"></div>
<svg class="a" style="left:40px;top:733px" width="16" height="15"><path d="M10 3.500v8l-4.500-4z" fill="#2f5f9f"/></svg>
<svg class="a" style="left:1889px;top:733px" width="16" height="15"><path d="M6 3.500v8l4.500-4z" fill="#2f5f9f"/></svg>
<svg class="a" style="left:866px;top:736px" width="9" height="9"><path d="M1.500 1v7M3.500 1v7M5.500 1v7M7.500 1v7" stroke="#7f9fc9" stroke-width="0.8"/></svg>
<div class="a" style="left:39px;top:755px;width:1868px;height:29px;background:#eef5fe"></div>
<div class="a" style="left:40px;top:783px;width:1867px;height:171px;background:#fff;border:1px solid #bdd3ef"></div>
<div class="a" style="left:47px;top:756px;width:82px;height:29px;background:linear-gradient(#e8f1fd,#fff);border:1px solid #b9d0ee;border-bottom:0;border-radius:3px 3px 0 0"></div>
<div class="a" style="left:134px;top:757px;width:1px;height:26px;background:#c8daf2"></div>
<div class="a" style="left:201px;top:757px;width:1px;height:26px;background:#c8daf2"></div>
<div class="a" style="left:206px;top:757px;width:1px;height:26px;background:#c8daf2"></div>
<div class="a" style="left:324px;top:757px;width:1px;height:26px;background:#c8daf2"></div>
<div class="a" style="left:329px;top:757px;width:1px;height:26px;background:#c8daf2"></div>
<div class="a" style="left:462px;top:757px;width:1px;height:26px;background:#c8daf2"></div>
<div class="a seg" style="left:74px;top:764px;font-size:11.2px">TL Totals</div>
<div class="a seg" style="left:162px;top:764px;font-size:11.2px">Taxes</div>
<div class="a seg" style="left:234px;top:763px;font-size:11.6px">Additional Infos</div>
<div class="a seg" style="left:357px;top:764px;font-size:11.2px">e-Despatch Details</div>
<svg class="a" style="left:58px;top:762px" width="12" height="16"><rect x="1.500" y="1.500" width="9" height="13" rx="1" fill="#e8e8e8" stroke="#bdbdbd"/><rect x="3" y="3" width="6" height="3" fill="#f5c26a"/><path d="M3 8h6M3 10h6M3 12h6" stroke="#c9c9c9"/></svg>
<svg class="a" style="left:143px;top:761px" width="18" height="18"><g fill="#e9b22d" stroke="#b98512" stroke-width="0.600"><ellipse cx="11" cy="4" rx="5" ry="2"/><ellipse cx="11" cy="6.500" rx="5" ry="2"/><ellipse cx="11" cy="9" rx="5" ry="2"/><ellipse cx="11" cy="11.500" rx="5" ry="2"/><ellipse cx="6" cy="11" rx="5" ry="2"/><ellipse cx="6" cy="13.500" rx="5" ry="2"/></g></svg>
<svg class="a" style="left:216px;top:762px" width="16" height="16"><rect x="1" y="5" width="11" height="8" rx="1" fill="#6aa6e8" stroke="#3f7ac4"/><path d="M2 8h9M2 10.500h9" stroke="#dbe9fb"/><path d="M8 4l4-3v2h3v3h-3v2z" fill="#f3a53a"/><ellipse cx="6" cy="14" rx="5" ry="1.500" fill="#f3c25a"/></svg>
<svg class="a" style="left:339px;top:762px" width="17" height="16"><path d="M1 5l6-3 6 6-5 4z" fill="#b9b9b9" stroke="#8a8a8a"/><rect x="7" y="8" width="8" height="5" rx="1" fill="#f3b21a" stroke="#a87508"/><circle cx="9" cy="14" r="1.300" fill="#222"/><circle cx="13.500" cy="14" r="1.300" fill="#222"/></svg>
<svg class="a" style="left:1875px;top:764px" width="30" height="12"><path d="M6.500 1.500v9l-4-4.500z" fill="#ddd" stroke="#999"/><path d="M21.500 1.500v9l4-4.500z" fill="#ddd" stroke="#999"/></svg>
<div class="lbl" style="left:49px;top:791.5px">Total Amount</div>
<div class="lbl" style="left:49px;top:816.5px">Total</div>
<div class="inp r" style="left:295px;top:791px;width:370px;height:18px;line-height:19px;">13,00</div>
<div class="inp r" style="left:295px;top:816px;width:370px;height:18px;line-height:19px;">7 960,24</div>
<div class="lbl" style="left:672px;top:791.5px">Discount Total 1</div>
<div class="inp r" style="left:918px;top:791px;width:370px;height:18px;line-height:19px;">0,00</div>
<div class="lbl" style="left:672px;top:816.5px">Discount Total 2</div>
<div class="inp r" style="left:918px;top:816px;width:370px;height:18px;line-height:19px;">0,00</div>
<div class="lbl" style="left:672px;top:841.5px">Discount Total 3</div>
<div class="inp r" style="left:918px;top:841px;width:370px;height:18px;line-height:19px;">0,00</div>
<div class="lbl" style="left:1295px;top:791.5px">Net Total</div>
<div class="inp r" style="left:1537px;top:791px;width:363px;height:18px;line-height:19px;">7 960,24</div>
<div class="lbl" style="left:1295px;top:816.5px">OTV Total</div>
<div class="inp r" style="left:1537px;top:816px;width:363px;height:18px;line-height:19px;">0,00</div>
<div class="lbl" style="left:1295px;top:841.5px">VAT Total</div>
<div class="inp r" style="left:1537px;top:841px;width:363px;height:18px;line-height:19px;">1 427,57</div>
<div class="lbl" style="left:1295px;top:866.5px">Total with VAT</div>
<div class="inp r" style="left:1537px;top:866px;width:363px;height:18px;line-height:19px;">9 387,81</div>
<div class="btn" style="left:423px"><span>New Record</span></div>
<div class="btn" style="left:533px"><span>Edit</span></div>
<div class="btn" style="left:643px"><span>Save</span></div>
<div class="btn" style="left:753px"><span>Search</span></div>
<div class="btn" style="left:863px"><span>Delete</span></div>
<div class="btn" style="left:973px"><span>Previous</span></div>
<div class="btn" style="left:1083px"><span>Next</span></div>
<div class="btn" style="left:1193px"><span>Copy</span></div>
<div class="btn" style="left:1303px"><span>Print</span></div>
<div class="btn" style="left:1413px"><span>Other Process</span></div>
<svg width="0" height="0" style="position:absolute"><defs><linearGradient id="pg" x1="0" y1="0" x2="1" y2="1"><stop offset="0" stop-color="#fbfbfb"/><stop offset="1" stop-color="#cfcfcf"/></linearGradient><radialGradient id="sp" cx="0.5" cy="0.3" r="0.75"><stop offset="0" stop-color="#9fd0ff"/><stop offset="0.55" stop-color="#2f7df0"/><stop offset="1" stop-color="#1c4fd0"/></radialGradient><linearGradient id="bn" x1="0" y1="0" x2="0" y2="1"><stop offset="0" stop-color="#2f86f5"/><stop offset="1" stop-color="#69b0ff"/></linearGradient><linearGradient id="lens" x1="0" y1="0" x2="0" y2="1"><stop offset="0" stop-color="#2f86f5"/><stop offset="1" stop-color="#bfe0ff"/></linearGradient><radialGradient id="hd" cx="0.5" cy="0.35" r="0.7"><stop offset="0" stop-color="#ffe08a"/><stop offset="1" stop-color="#f59a1e"/></radialGradient><filter id="sh"><feGaussianBlur stdDeviation="0.8"/></filter></defs></svg>
<svg class="a" style="left:423px;top:961px" width="36" height="48"><ellipse cx="17.5" cy="40.5" rx="12.5" ry="1.6" fill="#555" filter="url(#sh)" opacity="0.75"/><path d="M5.5 10h17l6 6v24h-23z" fill="url(#pg)" stroke="#b4b4b4" stroke-width="0.8"/><path d="M22.5 10v6h6z" fill="#e6e6e6" stroke="#b4b4b4" stroke-width="0.6"/><path d="M9.5 16h14" stroke="#bdbdbd" stroke-width="0.8"/><path d="M9.5 18.5h14" stroke="#bdbdbd" stroke-width="0.8"/><path d="M9.5 21.0h14" stroke="#bdbdbd" stroke-width="0.8"/><path d="M9.5 23.5h14" stroke="#bdbdbd" stroke-width="0.8"/><path d="M9.5 26.0h14" stroke="#bdbdbd" stroke-width="0.8"/><path d="M9.5 28.5h14" stroke="#bdbdbd" stroke-width="0.8"/><path d="M9.5 31.0h14" stroke="#bdbdbd" stroke-width="0.8"/><path d="M9.5 33.5h14" stroke="#bdbdbd" stroke-width="0.8"/><path d="M9.5 36.0h14" stroke="#bdbdbd" stroke-width="0.8"/></svg>
<svg class="a" style="left:533px;top:961px" width="36" height="48"><path d="M6 39h24" stroke="#444" stroke-width="1.8" filter="url(#sh)"/><path d="M20 10.500q2-3 4-1.500t0.500 4L13 35.500 8.500 33z" fill="#3f8df0" stroke="#2a6fd6" stroke-width="0.6"/><path d="M20 10.500q2-3 4-1.500t0.500 4L21.500 18.500 17.300 16z" fill="#eef4fd" stroke="#8fb0de" stroke-width="0.7"/><path d="M8.500 33L13 35.500 7.500 39z" fill="#f0f0f0" stroke="#999" stroke-width="0.5"/></svg>
<svg class="a" style="left:643px;top:961px" width="36" height="48"><rect x="4" y="10.5" width="27" height="28" rx="1.5" fill="#7e7e7e" stroke="#555" stroke-width="0.8"/><rect x="11" y="11" width="15" height="9" fill="#f1f1f1" stroke="#bbb" stroke-width="0.5"/><rect x="13.500" y="12.500" width="3" height="5" fill="#666"/><rect x="7.500" y="23" width="20" height="15" fill="#3b8ff5" stroke="#3a3ad0" stroke-width="0.8"/><path d="M9 27h17M9 29.500h17M9 32h17M9 34.500h17" stroke="#bfe0ff" stroke-width="1"/></svg>
<svg class="a" style="left:753px;top:961px" width="36" height="48"><ellipse cx="17.0" cy="41" rx="14.0" ry="1.6" fill="#555" filter="url(#sh)" opacity="0.75"/><rect x="5" y="11.500" width="10" height="17" rx="3" fill="#f1f1f1" stroke="#bdbdbd" stroke-width="0.7"/><rect x="18" y="11.500" width="10" height="17" rx="3" fill="#f1f1f1" stroke="#bdbdbd" stroke-width="0.7"/><path d="M8 13v4M10 13v4M12 13v4M21 13v4M23 13v4M25 13v4" stroke="#aaa" stroke-width="0.7"/><rect x="14" y="16" width="5" height="4" fill="#ccc"/><rect x="4" y="20" width="12" height="19" rx="4" fill="#f6f6f6" stroke="#c4c4c4" stroke-width="0.7"/><rect x="17" y="20" width="12" height="19" rx="4" fill="#f6f6f6" stroke="#c4c4c4" stroke-width="0.7"/><rect x="4.500" y="28.500" width="11" height="10" rx="4" fill="url(#lens)" stroke="#2f7df0" stroke-width="0.8"/><rect x="17.500" y="28.500" width="11" height="10" rx="4" fill="url(#lens)" stroke="#2f7df0" stroke-width="0.8"/></svg>
<svg class="a" style="left:863px;top:961px" width="36" height="48"><path d="M22 38l8-3-8-1z" fill="#444" opacity="0.7"/><path d="M3.500 11.500h23.500l-3.500 24h-16.500z" fill="url(#bn)" stroke="#1f6fe0" stroke-width="0.8"/><circle cx="15.200" cy="23" r="5" fill="none" stroke="#fff" stroke-width="2"/><path d="M13 18l3.500-1-1 3.500zM17.500 28l-3.500 1 1-3.500z" fill="#2f86f5"/><rect x="5" y="35.500" width="20" height="3.200" fill="#ffd27a" stroke="#f08a10" stroke-width="1"/></svg>
<svg class="a" style="left:973px;top:961px" width="36" height="48"><ellipse cx="17.0" cy="40" rx="13.0" ry="1.6" fill="#555" filter="url(#sh)" opacity="0.75"/><circle cx="17" cy="24" r="13.500" fill="url(#sp)" stroke="#2a5fd8" stroke-width="0.6"/><ellipse cx="17" cy="16.500" rx="9" ry="5" fill="#fff" opacity="0.35"/><path d="M16.500 19.500v9l-7.500-4.500zM24 19.500v9l-7.500-4.500z" fill="#fff"/></svg>
<svg class="a" style="left:1083px;top:961px" width="36" height="48"><ellipse cx="17.0" cy="40" rx="13.0" ry="1.6" fill="#555" filter="url(#sh)" opacity="0.75"/><circle cx="17" cy="24" r="13.500" fill="url(#sp)" stroke="#2a5fd8" stroke-width="0.6"/><ellipse cx="17" cy="16.500" rx="9" ry="5" fill="#fff" opacity="0.35"/><path d="M10.500 19.500v9l7.500-4.500zM18 19.500v9l7.500-4.500z" fill="#fff"/></svg>
<svg class="a" style="left:1193px;top:961px" width="36" height="48"><ellipse cx="17.0" cy="41" rx="13.0" ry="1.6" fill="#555" filter="url(#sh)" opacity="0.75"/><path d="M9 9.5h15l6 6v22h-21z" fill="url(#pg)" stroke="#b4b4b4" stroke-width="0.8"/><path d="M24 9.5v6h6z" fill="#e6e6e6" stroke="#b4b4b4" stroke-width="0.6"/><path d="M4.5 13h15l6 6v21.5h-21z" fill="url(#pg)" stroke="#b4b4b4" stroke-width="0.8"/><path d="M19.5 13v6h6z" fill="#e6e6e6" stroke="#b4b4b4" stroke-width="0.6"/><path d="M8.5 19h12" stroke="#bdbdbd" stroke-width="0.8"/><path d="M8.5 21.5h12" stroke="#bdbdbd" stroke-width="0.8"/><path d="M8.5 24.0h12" stroke="#bdbdbd" stroke-width="0.8"/><path d="M8.5 26.5h12" stroke="#bdbdbd" stroke-width="0.8"/><path d="M8.5 29.0h12" stroke="#bdbdbd" stroke-width="0.8"/><path d="M8.5 31.5h12" stroke="#bdbdbd" stroke-width="0.8"/><path d="M8.5 34.0h12" stroke="#bdbdbd" stroke-width="0.8"/><path d="M8.5 36.5h12" stroke="#bdbdbd" stroke-width="0.8"/></svg>
<svg class="a" style="left:1303px;top:961px" width="36" height="48"><ellipse cx="18.5" cy="39.5" rx="13.5" ry="1.6" fill="#555" filter="url(#sh)" opacity="0.75"/><path d="M9 9.5h16.5l6 6v22.5h-22.5z" fill="url(#pg)" stroke="#b4b4b4" stroke-width="0.8"/><path d="M25.5 9.5v6h6z" fill="#e6e6e6" stroke="#b4b4b4" stroke-width="0.6"/><path d="M13 15.5h13.5" stroke="#bdbdbd" stroke-width="0.8"/><path d="M13 18.0h13.5" stroke="#bdbdbd" stroke-width="0.8"/><path d="M13 20.5h13.5" stroke="#bdbdbd" stroke-width="0.8"/><path d="M13 23.0h13.5" stroke="#bdbdbd" stroke-width="0.8"/><path d="M13 25.5h13.5" stroke="#bdbdbd" stroke-width="0.8"/><path d="M13 28.0h13.5" stroke="#bdbdbd" stroke-width="0.8"/><path d="M13 30.5h13.5" stroke="#bdbdbd" stroke-width="0.8"/><path d="M13 33.0h13.5" stroke="#bdbdbd" stroke-width="0.8"/><rect x="8.800" y="27" width="3" height="12" fill="#f4f4f4" stroke="#bbb" stroke-width="0.6"/><circle cx="10" cy="20" r="7.200" fill="#e6f1fd" fill-opacity="0.85" stroke="#f08c1a" stroke-width="2.400"/></svg>
<svg class="a" style="left:1413px;top:961px" width="36" height="48"><rect x="2.500" y="11.500" width="15" height="25" fill="#f4f4f4" stroke="#aaa" stroke-width="0.8"/><rect x="3" y="12" width="14" height="3.500" fill="#cfcfcf"/><path d="M5 20h3M5 23.500h3M5 27h3M5 30.500h3" stroke="#3b8fe8" stroke-width="1.600"/><path d="M10 20h6M10 23.500h6M10 27h6M10 30.500h6" stroke="#bbb" stroke-width="1.200"/><path d="M12.500 37.500c0-8 3-12 9.500-12s9.500 4 9.500 12z" fill="#f7f7f7" stroke="#bdbdbd" stroke-width="0.7"/><path d="M20.600 26h2.800l0.800 10-2.200 3-2.200-3z" fill="#2f86f5"/><circle cx="22" cy="17.300" r="7" fill="url(#hd)" stroke="#f08a10" stroke-width="0.6"/></svg>
<div class="a" style="left:0;top:1015px;width:1921px;height:3px;background:#dce9fb"></div>
<div class="a" style="left:1px;top:1017px;width:1919px;height:23px;background:linear-gradient(#c9ddf6,#b9d1f0 50%,#afc9ec);border:1px solid #6d86a8;border-radius:2px"></div>
<div class="a" style="left:2px;top:1021px;width:16px;height:16px;background:#e81d2d"></div>
<svg class="a" style="left:2px;top:1021px" width="16" height="16"><path d="M4.500 4L11.500 12M11.500 4L4.500 12" stroke="#fff" stroke-width="2.400" stroke-linecap="square"/></svg>
<div class="a" style="left:20px;top:1020px;font-size:11px;letter-spacing:-0.25px;color:#111;line-height:14px">Version : v.2020.3.20.1</div>
<div class="a" style="left:1847px;top:1019px;width:1px;height:19px;background:#9db5d6"></div><div class="a" style="left:1848px;top:1019px;width:1px;height:19px;background:#eef4fd"></div>
<svg class="a" style="left:1850px;top:1019px" width="70" height="20">
<defs><linearGradient id="s1" x1="0" y1="0" x2="1" y2="1"><stop offset="0" stop-color="#ff9a6a"/><stop offset="1" stop-color="#e2521c"/></linearGradient><linearGradient id="s2" x1="0" y1="0" x2="1" y2="1"><stop offset="0" stop-color="#7fd45a"/><stop offset="1" stop-color="#2f9a22"/></linearGradient><linearGradient id="s3" x1="0" y1="0" x2="1" y2="1"><stop offset="0" stop-color="#7fd6e6"/><stop offset="1" stop-color="#1f93b8"/></linearGradient><linearGradient id="s4" x1="0" y1="0" x2="1" y2="1"><stop offset="0" stop-color="#d5ddee"/><stop offset="1" stop-color="#8ea5cf"/></linearGradient></defs>
<rect x="5.500" y="2.200" width="10.500" height="8" fill="url(#s1)"/><rect x="3.500" y="5.400" width="10.500" height="8.200" fill="url(#s2)"/><rect x="2" y="9" width="10.500" height="8.200" fill="url(#s3)"/>
<path d="M22.500 3.500l9 0.500v13l-9-1z" fill="url(#s4)" stroke="#8093b8" stroke-width="0.500"/><path d="M31.500 15.500l2 1.500h-2z" fill="#667"/><circle cx="26" cy="11" r="2" fill="#d8282a"/><path d="M28.300 5l2 3.300h-4z" fill="#f3c22a"/>
<circle cx="42.600" cy="8.400" r="4.200" fill="none" stroke="#3aa8e6" stroke-width="2.600"/><circle cx="42.600" cy="8.400" r="5.600" fill="none" stroke="#3aa8e6" stroke-width="1.200" stroke-dasharray="1.500 1.400"/><circle cx="49" cy="13" r="3.600" fill="#f1c324"/><circle cx="49" cy="13" r="1.200" fill="#fbe58a"/>
<g fill="#254f8f"><rect x="66" y="9.500" width="1.800" height="1.800"/><rect x="62" y="13.500" width="1.800" height="1.800"/><rect x="66" y="13.500" width="1.800" height="1.800"/><rect x="58" y="17.500" width="1.800" height="1.800"/><rect x="62" y="17.500" width="1.800" height="1.800"/><rect x="66" y="17.500" width="1.800" height="1.800"/></g></svg>
<div class="a" style="left:0;top:1040px;width:1921px;height:3px;background:#c3c5c7"></div>
<div class="a" style="left:114px;top:1041px;width:59px;height:2px;background:#dedede;border:1px solid #a9a9a9;border-bottom:0"></div>
<div class="a" style="left:176px;top:1041px;width:59px;height:2px;background:#dedede;border:1px solid #a9a9a9;border-bottom:0"></div>
<div class="a" style="left:486px;top:1041px;width:59px;height:2px;background:#dedede;border:1px solid #a9a9a9;border-bottom:0"></div>
<div class="a" style="left:796px;top:1041px;width:59px;height:2px;background:#dedede;border:1px solid #a9a9a9;border-bottom:0"></div>
<div class="a" style="left:1043px;top:1041px;width:60px;height:2px;background:#dedede;border:1px solid #a9a9a9;border-bottom:0"></div>
<div class="a" style="left:1354px;top:1041px;width:50px;height:2px;background:#dedede;border:1px solid #a9a9a9;border-bottom:0"></div>
<div class="a" style="left:1407px;top:1041px;width:5px;height:2px;background:#dedede;border:1px solid #a9a9a9;border-bottom:0"></div>
<div class="a" style="left:1415px;top:1041px;width:59px;height:2px;background:#dedede;border:1px solid #a9a9a9;border-bottom:0"></div>
</body></html>
